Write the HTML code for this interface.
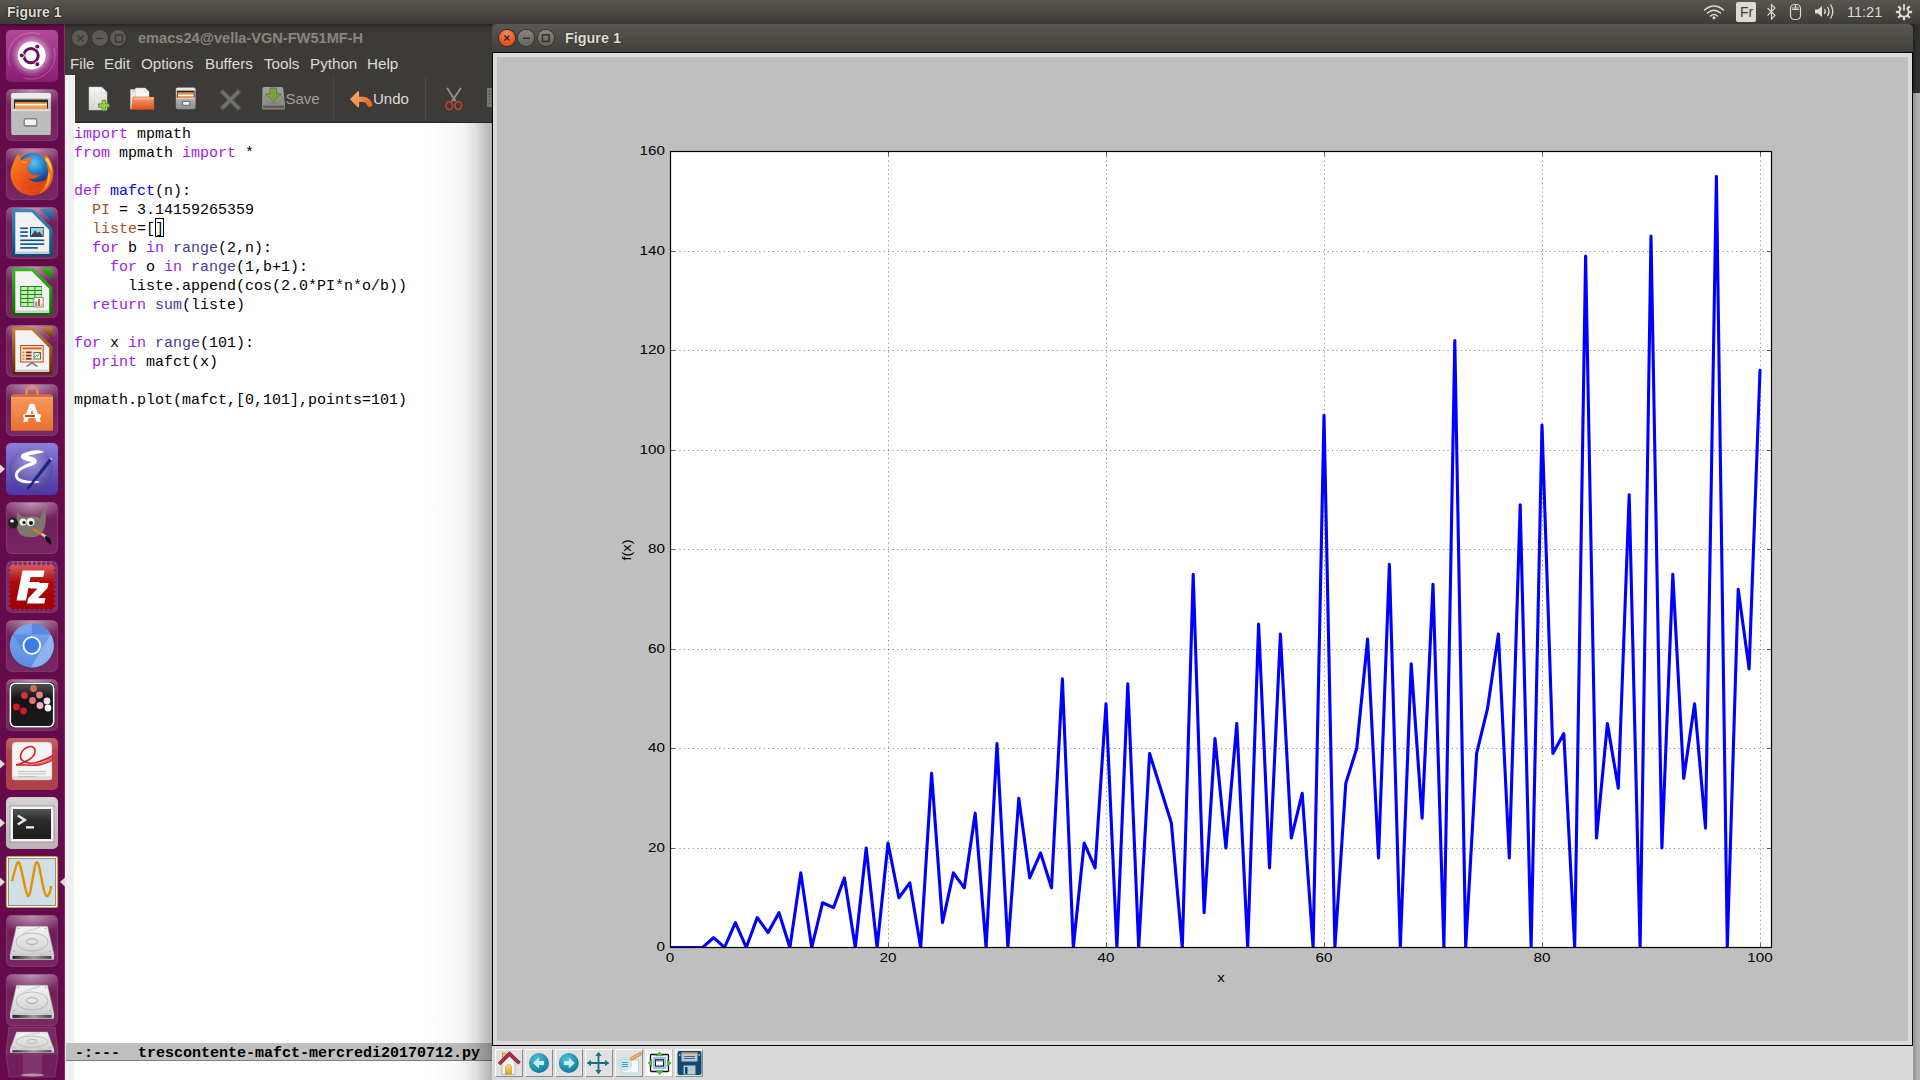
<!DOCTYPE html>
<html><head><meta charset="utf-8">
<style>
*{margin:0;padding:0;box-sizing:border-box}
html,body{width:1920px;height:1080px;overflow:hidden;background:#3c3b37;font-family:"Liberation Sans",sans-serif}
.a{position:absolute}
#panel{position:absolute;left:0;top:0;width:1920px;height:24px;background:linear-gradient(#57554e,#3d3c38)}
#panel .title{position:absolute;left:7px;top:4px;font-weight:bold;font-size:14px;color:#dfdbd2;text-shadow:0 0 1.5px #000,0 0 1px #000}
#launcher{position:absolute;left:0;top:24px;width:65px;height:1056px;background:#650b4c}
#emacs{position:absolute;left:65px;top:24px;width:427px;height:1056px;overflow:hidden}
#ebody{position:absolute;left:0;top:28px;width:427px;height:1028px;background:#fff}
#etitle{position:absolute;left:0;top:0;width:427px;height:28px;background:linear-gradient(#262522,#383733 4px,#3c3b37 8px);border-radius:5px 0 0 0}
.etxt{position:absolute;left:73px;top:5.5px;font-weight:bold;font-size:14.6px;color:#8a867e;white-space:nowrap}
#emenu{position:absolute;left:0;top:28px;width:427px;height:23px;background:#3c3b37;color:#dfdbd2;font-size:15.2px}
#emenu span{position:absolute;top:3px}
#etool{position:absolute;left:10px;top:51px;width:417px;height:48px;background:#3c3b37;border-bottom:1px solid #262622}
#efringe{position:absolute;left:0;top:51px;width:8.6px;height:1005px;background:#f0f0f0}
#eshade{position:absolute;left:360px;top:99px;width:67px;height:1000px;background:linear-gradient(90deg,rgba(0,0,0,0),rgba(0,0,0,0.04) 56%,rgba(0,0,0,0.12) 75%,rgba(0,0,0,0.25) 93%,rgba(0,0,0,0.31))}
#code{position:absolute;left:9px;top:101px;font-family:"Liberation Mono",monospace;font-size:15px;line-height:19px;color:#000;white-space:pre}
#modeline{position:absolute;left:1px;top:1019px;width:426px;height:18px;background:#bfbfbf;border-bottom:1px solid #7f7f7f;font-family:"Liberation Mono",monospace;font-weight:bold;font-size:15px;line-height:21px;white-space:pre;color:#000}
#fig{position:absolute;left:492px;top:24px;width:1421px;height:1056px}
#fbar{position:absolute;left:0;top:1022px;width:1421px;height:34px;background:#d9d9d9}
#ftitle{position:absolute;left:0;top:0;width:1421px;height:28px;background:linear-gradient(#5b5950,#3f3e3a);border-radius:5px 5px 0 0}
.ftxt{position:absolute;left:73px;top:6px;font-weight:bold;font-size:14.4px;color:#dfdbd2;white-space:nowrap;text-shadow:0 0 1.5px #1a1a18}
#canvasframe{position:absolute;left:0;top:28px;width:1421px;height:994px;border:1px solid #000;background:#dadada}
#canvas{position:absolute;left:5px;top:33px;width:1411px;height:984px;background:#bfbfbf}
#rstrip{position:absolute;left:1913px;top:93px;width:7px;height:987px;background:linear-gradient(90deg,#979797,#9a9a9a 28%,#a5a5a3 45%,#afafad 60%,#b0b0ae)}
#rstrip2{position:absolute;left:1913px;top:24px;width:7px;height:69px;background:linear-gradient(90deg,#222220,#2e2d2a 40%,#34332f)}
.tl{position:absolute;font-size:13.6px;color:#000;line-height:16px}
.cur{outline:1px solid #000;outline-offset:-1px}
.kw{color:#a020f0}.fn{color:#0000ff}.bi{color:#483d8b}.vn{color:#a0522d}
.wb{position:absolute;width:16px;height:16px;border-radius:50%}
.tb{position:absolute;top:1049px;width:28px;height:28px;background:#e1e1e1;border:1px solid;border-color:#fcfcfc #8c8c8c #8c8c8c #fcfcfc}
</style></head><body>
<div id="panel"><div class="title">Figure 1</div>
<svg class="a" style="left:1690px;top:0" width="230" height="24" viewBox="1690 0 230 24">
<g fill="none" stroke="#dfdbd2" stroke-linecap="round">
<path d="M1704.5,10 Q1714,2 1723.5,10" stroke-width="1.5"/>
<path d="M1707.5,13 Q1714,7.5 1720.5,13" stroke-width="1.5"/>
<path d="M1710.5,16 Q1714,13 1717.5,16" stroke-width="1.5"/>
</g>
<path d="M1712,18 L1714,16 L1716,18 L1714,19.5 Z" fill="#dfdbd2"/>
<rect x="1736" y="2" width="20" height="20" rx="2" fill="#dfdbd2"/>
<path d="M1767.5,8 L1775,15.5 L1771.5,19 V4.5 L1775,8 L1767.5,15.5" fill="none" stroke="#dfdbd2" stroke-width="1.1"/>
<rect x="1790.5" y="4.5" width="10" height="15" rx="4" fill="none" stroke="#dfdbd2" stroke-width="1.2"/>
<path d="M1795.5,4.5 V9.5 M1792.5,9.5 h6" stroke="#dfdbd2" stroke-width="1"/>
<path d="M1792,7 q3.5,-1 7,0 v3 h-7 Z" fill="#dfdbd2" opacity="0.5"/>
<path d="M1815,9.5 H1818 L1822,6 V17 L1818,13.5 H1815 Z" fill="#dfdbd2"/>
<g fill="none" stroke="#dfdbd2" stroke-width="1.3"><path d="M1824.5,9 Q1826,11.5 1824.5,14"/><path d="M1827.5,7 Q1830.5,11.5 1827.5,16"/><path d="M1830.5,4.5 Q1835,11.5 1830.5,18.5"/></g>
<g transform="translate(1904,12)" fill="#dfdbd2"><rect x="-1.15" y="-8.1" width="2.3" height="3.2" transform="rotate(45)"/><rect x="-1.15" y="-8.1" width="2.3" height="3.2" transform="rotate(90)"/><rect x="-1.15" y="-8.1" width="2.3" height="3.2" transform="rotate(135)"/><rect x="-1.15" y="-8.1" width="2.3" height="3.2" transform="rotate(180)"/><rect x="-1.15" y="-8.1" width="2.3" height="3.2" transform="rotate(225)"/><rect x="-1.15" y="-8.1" width="2.3" height="3.2" transform="rotate(270)"/><rect x="-1.15" y="-8.1" width="2.3" height="3.2" transform="rotate(315)"/><path d="M-2.67,-3.81 A4.65,4.65 0 1 0 2.67,-3.81" fill="none" stroke="#dfdbd2" stroke-width="1.7"/><rect x="-0.9" y="-8" width="1.8" height="6.6"/></g>
</svg>
<div class="a" style="left:1737px;top:4px;width:19px;text-align:center;font-size:14px;color:#3c3b37">Fr</div>
<div class="a" style="left:1847px;top:4px;font-size:14.5px;color:#dfdbd2">11:21</div>

</div>
<div id="launcher"></div>
<svg width="65" height="1056" viewBox="0 24 65 1056" style="position:absolute;left:0;top:24px">
<defs>
<linearGradient id="tg" x1="0" y1="0" x2="0" y2="1"><stop offset="0" stop-color="#fff" stop-opacity="0.22"/><stop offset="0.35" stop-color="#fff" stop-opacity="0.08"/><stop offset="1" stop-color="#fff" stop-opacity="0.12"/></linearGradient>
<radialGradient id="glow" cx="0.5" cy="0" r="0.6"><stop offset="0" stop-color="#fff" stop-opacity="0.45"/><stop offset="1" stop-color="#fff" stop-opacity="0"/></radialGradient>
<linearGradient id="ubg" x1="0" y1="0" x2="0" y2="1"><stop offset="0" stop-color="#b04a98"/><stop offset="1" stop-color="#8a1d74"/></linearGradient>
<linearGradient id="cab" x1="0" y1="0" x2="0" y2="1"><stop offset="0" stop-color="#d6d6d6"/><stop offset="1" stop-color="#9a9a9a"/></linearGradient>
<radialGradient id="ffg" cx="0.55" cy="0.3" r="0.6"><stop offset="0" stop-color="#5ac8f0"/><stop offset="0.6" stop-color="#1f6fc0"/><stop offset="1" stop-color="#123a80"/></radialGradient>
<linearGradient id="ffo" x1="0" y1="0" x2="1" y2="1"><stop offset="0" stop-color="#ff8a1a"/><stop offset="0.6" stop-color="#e8501c"/><stop offset="1" stop-color="#d23a10"/></linearGradient>
<linearGradient id="bag" x1="0" y1="0" x2="0" y2="1"><stop offset="0" stop-color="#f29a5a"/><stop offset="1" stop-color="#ec7030"/></linearGradient>
<linearGradient id="emt" x1="0" y1="0" x2="0" y2="1"><stop offset="0" stop-color="#8a7fd8"/><stop offset="1" stop-color="#4a35a8"/></linearGradient>
<radialGradient id="emc" cx="0.5" cy="0.3" r="0.7"><stop offset="0" stop-color="#a098e0"/><stop offset="1" stop-color="#4a3a9a"/></radialGradient>
<linearGradient id="fz" x1="0" y1="0" x2="0" y2="1"><stop offset="0" stop-color="#e06060"/><stop offset="0.4" stop-color="#b00808"/><stop offset="1" stop-color="#a00000"/></linearGradient>
<linearGradient id="chr" x1="0" y1="0" x2="0" y2="1"><stop offset="0" stop-color="#7aa6ee"/><stop offset="1" stop-color="#5a8ee6"/></linearGradient>
<linearGradient id="scp" x1="0" y1="0" x2="0" y2="1"><stop offset="0" stop-color="#505050"/><stop offset="0.35" stop-color="#141414"/><stop offset="1" stop-color="#1a1a1a"/></linearGradient>
<linearGradient id="term" x1="0" y1="0" x2="0" y2="1"><stop offset="0" stop-color="#555"/><stop offset="0.4" stop-color="#2a2a2a"/><stop offset="1" stop-color="#1e1e1e"/></linearGradient>
<linearGradient id="disk" x1="0" y1="0" x2="0" y2="1"><stop offset="0" stop-color="#f4f4f4"/><stop offset="1" stop-color="#cfcfcf"/></linearGradient>
<linearGradient id="dfront" x1="0" y1="0" x2="1" y2="0"><stop offset="0" stop-color="#222"/><stop offset="0.55" stop-color="#9a9a9a"/><stop offset="0.8" stop-color="#666"/><stop offset="1" stop-color="#444"/></linearGradient>
<linearGradient id="evt" x1="0" y1="0" x2="0" y2="1"><stop offset="0" stop-color="#c86068"/><stop offset="0.3" stop-color="#b3404a"/><stop offset="1" stop-color="#b0424c"/></linearGradient>
<linearGradient id="termt" x1="0" y1="0" x2="0" y2="1"><stop offset="0" stop-color="#d8d0d6"/><stop offset="1" stop-color="#bdb2bb"/></linearGradient>
<linearGradient id="topsh" x1="0" y1="0" x2="0" y2="1"><stop offset="0" stop-color="#000" stop-opacity="0.35"/><stop offset="1" stop-color="#000" stop-opacity="0"/></linearGradient>
</defs>
<rect x="6" y="30" width="52" height="52" rx="5" fill="url(#ubg)"/>
<clipPath id="uclip"><rect x="0" y="0" width="52" height="52" rx="5"/></clipPath><g transform="translate(6,30)"><g clip-path="url(#uclip)"><circle cx="26" cy="26" r="20" fill="#fff" fill-opacity="0.10"/><path d="M4,36 A24,24 0 0 1 34,4" stroke="#fff" stroke-opacity="0.16" stroke-width="1.5" fill="none"/><path d="M48,18 A24,24 0 0 1 18,48" stroke="#fff" stroke-opacity="0.16" stroke-width="1.5" fill="none"/><circle cx="25.8" cy="25.6" r="18" fill="#fff" fill-opacity="0.14"/><circle cx="25.8" cy="25.6" r="16" fill="#fff" fill-opacity="0.14"/></g><circle cx="25.7" cy="25.5" r="14" fill="#fff"/><circle cx="25" cy="25.6" r="7.2" fill="none" stroke="#6a1259" stroke-width="3"/><circle cx="31.3" cy="16.6" r="2.5" fill="#6a1259" stroke="#fff" stroke-width="1"/><circle cx="15.8" cy="25.4" r="2.5" fill="#6a1259" stroke="#fff" stroke-width="1"/><circle cx="31.3" cy="34.2" r="2.5" fill="#6a1259" stroke="#fff" stroke-width="1"/></g>
<rect x="6.5" y="89.5" width="51" height="51" rx="5" fill="url(#tg)" stroke="#fff" stroke-opacity="0.13"/><rect x="6.5" y="89.5" width="51" height="30" rx="5" fill="url(#glow)"/>
<g transform="translate(6,89)"><rect x="5" y="4" width="40" height="42" rx="2.5" fill="url(#cab)"/><rect x="5" y="4" width="40" height="5" rx="2.5" fill="#ececec"/><rect x="8" y="10.5" width="34" height="9" fill="#2a2a2a"/><path d="M9,13 H41 V20 H9 Z" fill="#f0a050"/><rect x="9.5" y="15" width="31" height="1.4" fill="#fff"/><rect x="9" y="13" width="32" height="1" fill="#d87a30"/><path d="M6,20.5 H44 V45 Q44,46 43,46 H7 Q6,46 6,45 Z" fill="#bcbcbc"/><rect x="6" y="20.5" width="38" height="1.6" fill="#e2e2e2"/><rect x="17.5" y="29" width="14" height="9" rx="1.8" fill="#8a8a8a"/><rect x="19" y="30.5" width="11" height="5.5" rx="1" fill="#f2f2f2"/></g>
<rect x="6.5" y="148.5" width="51" height="51" rx="5" fill="url(#tg)" stroke="#fff" stroke-opacity="0.13"/><rect x="6.5" y="148.5" width="51" height="30" rx="5" fill="url(#glow)"/>
<g transform="translate(6,148)"><circle cx="26" cy="26" r="21.5" fill="url(#ffo)"/><circle cx="26.5" cy="21.5" r="16.5" fill="url(#ffg)"/><path d="M40,7 C46,12 48,20 47,27 C46,36 40,43 33,46 C38,40 42,33 42,26 C42,18 40,12 37,9 Z" fill="#f06a1a"/><path d="M41,9 C45,14 46,20 45.5,25 C44,20 42,15 39,12 Z" fill="#ffd23a"/><path d="M44,24 C45,30 43,36 39,40 C41,35 42,30 42,26 Z" fill="#ffb02a"/><path d="M6,24 C6,15 10,9 12.5,5.5 C13,9 14,11.5 16,12.5 C19,10 23,9 26,10 C24,11.5 23.5,13.5 25,15.5 C21.5,16.5 20,20 22.5,23.5 C25,27 30,27.5 34.5,26.5 C31.5,30.5 26,32 22,30 C26,34.5 33,35 38.5,32 C35,39 28,43 21,42 C12,41 6,33 6,24 Z" fill="url(#ffo)"/><path d="M15.5,13 C17,15 19,15 21,14" stroke="#ffb060" stroke-width="1" fill="none"/></g>
<rect x="6.5" y="207.5" width="51" height="51" rx="5" fill="url(#tg)" stroke="#fff" stroke-opacity="0.13"/><rect x="6.5" y="207.5" width="51" height="30" rx="5" fill="url(#glow)"/><defs><linearGradient id="lw" x1="0" y1="0" x2="0" y2="1"><stop offset="0" stop-color="#3a8ac0"/><stop offset="1" stop-color="#0b4a7e"/></linearGradient></defs><g transform="translate(6,207)"><path d="M8,2 H27 L46.5,21.5 V47.5 Q46.5,49.5 44.5,49.5 H8 Q6,49.5 6,47.5 V4 Q6,2 8,2 Z" fill="url(#lw)"/><path d="M9.3,5.3 H25.8 L43.2,22.7 V46.8 H9.3 Z" fill="#f2f2f2"/><path d="M9.3,44.5 H43.2 V46.8 H9.3 Z" fill="#c8cccc"/><path d="M34,2 H44.5 Q46.5,2 46.5,4 V14.5 Z" fill="url(#lw)"/><g fill="#0f4f86"><rect x="14.2" y="20.5" width="7.7" height="1.6"/><rect x="14.2" y="24.3" width="7.7" height="1.6"/><rect x="14.2" y="28.1" width="7.7" height="1.6"/><rect x="24" y="20" width="13.7" height="10"/><rect x="14.2" y="32.5" width="24" height="1.6"/><rect x="14.2" y="36.3" width="24" height="1.6"/><rect x="14.2" y="40.1" width="17.5" height="1.6"/></g><rect x="25" y="21" width="11.7" height="8" fill="#9ad0f2"/><path d="M25,29 L29,23.5 L31.5,26 L33.5,24.5 L36.7,29 Z" fill="#444"/><circle cx="35.5" cy="22.2" r="1.3" fill="#f8d040"/></g>
<rect x="6.5" y="266.5" width="51" height="51" rx="5" fill="url(#tg)" stroke="#fff" stroke-opacity="0.13"/><rect x="6.5" y="266.5" width="51" height="30" rx="5" fill="url(#glow)"/><defs><linearGradient id="lc" x1="0" y1="0" x2="0" y2="1"><stop offset="0" stop-color="#3cb82a"/><stop offset="1" stop-color="#0a6800"/></linearGradient></defs><g transform="translate(6,266)"><path d="M8,2 H27 L46.5,21.5 V47.5 Q46.5,49.5 44.5,49.5 H8 Q6,49.5 6,47.5 V4 Q6,2 8,2 Z" fill="url(#lc)"/><path d="M9.3,5.3 H25.8 L43.2,22.7 V46.8 H9.3 Z" fill="#f2f2f2"/><path d="M9.3,44.5 H43.2 V46.8 H9.3 Z" fill="#c8cccc"/><path d="M34,2 H44.5 Q46.5,2 46.5,4 V14.5 Z" fill="url(#lc)"/><rect x="14.2" y="20" width="21.8" height="20.8" fill="#1a8a10"/><rect x="15.2" y="21.0" width="6.1" height="3" fill="#c0f0b0"/><rect x="22.3" y="21.0" width="6.1" height="3" fill="#c0f0b0"/><rect x="29.4" y="21.0" width="6.1" height="3" fill="#c0f0b0"/><rect x="15.2" y="25.0" width="6.1" height="3" fill="#c0f0b0"/><rect x="22.3" y="25.0" width="6.1" height="3" fill="#c0f0b0"/><rect x="29.4" y="25.0" width="6.1" height="3" fill="#c0f0b0"/><rect x="15.2" y="29.0" width="6.1" height="3" fill="#c0f0b0"/><rect x="22.3" y="29.0" width="6.1" height="3" fill="#c0f0b0"/><rect x="29.4" y="29.0" width="6.1" height="3" fill="#c0f0b0"/><rect x="15.2" y="33.0" width="6.1" height="3" fill="#c0f0b0"/><rect x="22.3" y="33.0" width="6.1" height="3" fill="#c0f0b0"/><rect x="29.4" y="33.0" width="6.1" height="3" fill="#c0f0b0"/><rect x="15.2" y="37.0" width="6.1" height="3" fill="#c0f0b0"/><rect x="22.3" y="37.0" width="6.1" height="3" fill="#c0f0b0"/><rect x="29.4" y="37.0" width="6.1" height="3" fill="#c0f0b0"/><rect x="27.3" y="31" width="10.4" height="10.4" fill="#8a8a8a"/><rect x="28.3" y="32" width="8.4" height="8.4" fill="#fff"/><rect x="29.3" y="35.5" width="2" height="4.5" fill="#3aa0f0"/><rect x="32" y="33" width="2" height="7" fill="#e86020"/><rect x="34.7" y="37.5" width="2" height="2.5" fill="#f0c020"/></g>
<rect x="6.5" y="325.5" width="51" height="51" rx="5" fill="url(#tg)" stroke="#fff" stroke-opacity="0.13"/><rect x="6.5" y="325.5" width="51" height="30" rx="5" fill="url(#glow)"/><defs><linearGradient id="li" x1="0" y1="0" x2="0" y2="1"><stop offset="0" stop-color="#c8803a"/><stop offset="1" stop-color="#5e2400"/></linearGradient></defs><g transform="translate(6,325)"><path d="M8,2 H27 L46.5,21.5 V47.5 Q46.5,49.5 44.5,49.5 H8 Q6,49.5 6,47.5 V4 Q6,2 8,2 Z" fill="url(#li)"/><path d="M9.3,5.3 H25.8 L43.2,22.7 V46.8 H9.3 Z" fill="#f2f2f2"/><path d="M9.3,44.5 H43.2 V46.8 H9.3 Z" fill="#c8cccc"/><path d="M34,2 H44.5 Q46.5,2 46.5,4 V14.5 Z" fill="url(#li)"/><rect x="14.2" y="20" width="23.5" height="17.5" fill="#c04a10"/><rect x="15.2" y="21" width="21.5" height="15.5" fill="#fbe4d4"/><rect x="16.5" y="22.5" width="19" height="1.8" fill="#d05a20"/><rect x="16.5" y="26.5" width="2" height="1.8" fill="#e08050"/><rect x="20" y="26.5" width="5.5" height="1.8" fill="#8a3010"/><rect x="16.5" y="29.7" width="2" height="1.8" fill="#e08050"/><rect x="20" y="29.7" width="5.5" height="1.8" fill="#8a3010"/><rect x="16.5" y="32.9" width="2" height="1.8" fill="#e08050"/><rect x="20" y="32.9" width="5.5" height="1.8" fill="#8a3010"/><rect x="27.5" y="27" width="7.5" height="7.5" fill="#666"/><rect x="28.5" y="28" width="5.5" height="5.5" fill="#fff"/><path d="M29,32.5 L30.5,30 L31.5,31.5 L33.5,28.5" stroke="#2a9a2a" stroke-width="1" fill="none"/><path d="M20.5,41.5 L26,37.8 L31.5,41.5" stroke="#6a6a6a" stroke-width="1.4" fill="none"/></g>
<rect x="6.5" y="384.5" width="51" height="51" rx="5" fill="url(#tg)" stroke="#fff" stroke-opacity="0.13"/><rect x="6.5" y="384.5" width="51" height="30" rx="5" fill="url(#glow)"/>
<g transform="translate(6,384)"><path d="M20.5,16 V7 Q20.5,4 23.5,4 H28.5 Q31.5,4 31.5,7 V16" stroke="#ee8a58" stroke-width="2.6" fill="none"/><path d="M5,12 H47 V46.8 H5 Z" fill="url(#bag)"/><path d="M7,10.2 H45 L47,13 H5 Z" fill="#e0683a"/><rect x="5" y="13" width="42" height="2" fill="#f7a070" opacity="0.6"/><path d="M17,37.7 L24,19.7 H28 L35,37.7 H30.5 L26,25.5 L21.5,37.7 Z" fill="#fff"/><rect x="17" y="30" width="18" height="4" rx="2" fill="#fff"/><rect x="19" y="31" width="10" height="2" fill="#e04010"/></g>
<rect x="6" y="443" width="52" height="52" rx="5" fill="url(#emt)"/>
<g transform="translate(6,443)"><circle cx="25" cy="27" r="22" fill="url(#emc)"/><path d="M16,11 C24,7 34,6 38,9 C34,11 26,11 22,13 C30,14 34,18 28,22 C22,24 14,26 12,31 C10,36 20,38 28,38 C34,38 36,39 30,40 C20,41 10,40 9,33 C8,26 18,22 26,19 C20,18 12,16 16,11 Z" fill="#fff"/><path d="M44,15 L22,44 L21,46 L24,44.5 L46,17 Z" fill="#1a2a90" stroke="#0a1050" stroke-width="0.6"/><path d="M44,15 L46,17" stroke="#ccc" stroke-width="1.5"/></g>
<rect x="6.5" y="502.5" width="51" height="51" rx="5" fill="url(#tg)" stroke="#fff" stroke-opacity="0.13"/><rect x="6.5" y="502.5" width="51" height="30" rx="5" fill="url(#glow)"/>
<g transform="translate(6,502)"><path d="M11,9 C14,14 16,15 20,15 C25,14 31,14 34,16 C36,11 38,8 39,6 C41,16 40,28 34,33 C29,36 20,36 15,33 C10,29 10,20 11,9 Z" fill="#7d786c"/><ellipse cx="7" cy="21" rx="5" ry="5.5" fill="#222" transform="rotate(-20 7 21)"/><ellipse cx="6" cy="19" rx="1.8" ry="1.5" fill="#fff"/><circle cx="17" cy="20" r="3.5" fill="#f0f0f0"/><circle cx="18" cy="20.5" r="1.6" fill="#111"/><circle cx="24.5" cy="20" r="4" fill="#f0f0f0"/><circle cx="25" cy="21" r="2" fill="#111"/><path d="M27,27 L37,33" stroke="#e07a10" stroke-width="2.2"/><path d="M36,32 L40,35" stroke="#ccc" stroke-width="2.4"/><path d="M39,34 C44,35 46,38 45,43 C42,41 39,38 39,34 Z" fill="#111"/></g>
<rect x="6.5" y="561.5" width="51" height="51" rx="5" fill="url(#tg)" stroke="#fff" stroke-opacity="0.13"/><rect x="6.5" y="561.5" width="51" height="30" rx="5" fill="url(#glow)"/>
<g transform="translate(6,561)"><rect x="2.5" y="2.5" width="47" height="47" fill="url(#fz)"/><g fill="#7a2e6c"><circle cx="4.80" cy="2.5" r="1.9"/><circle cx="4.80" cy="49.5" r="1.9"/><circle cx="2.5" cy="4.80" r="1.9"/><circle cx="49.5" cy="4.80" r="1.9"/><circle cx="9.51" cy="2.5" r="1.9"/><circle cx="9.51" cy="49.5" r="1.9"/><circle cx="2.5" cy="9.51" r="1.9"/><circle cx="49.5" cy="9.51" r="1.9"/><circle cx="14.22" cy="2.5" r="1.9"/><circle cx="14.22" cy="49.5" r="1.9"/><circle cx="2.5" cy="14.22" r="1.9"/><circle cx="49.5" cy="14.22" r="1.9"/><circle cx="18.93" cy="2.5" r="1.9"/><circle cx="18.93" cy="49.5" r="1.9"/><circle cx="2.5" cy="18.93" r="1.9"/><circle cx="49.5" cy="18.93" r="1.9"/><circle cx="23.64" cy="2.5" r="1.9"/><circle cx="23.64" cy="49.5" r="1.9"/><circle cx="2.5" cy="23.64" r="1.9"/><circle cx="49.5" cy="23.64" r="1.9"/><circle cx="28.35" cy="2.5" r="1.9"/><circle cx="28.35" cy="49.5" r="1.9"/><circle cx="2.5" cy="28.35" r="1.9"/><circle cx="49.5" cy="28.35" r="1.9"/><circle cx="33.06" cy="2.5" r="1.9"/><circle cx="33.06" cy="49.5" r="1.9"/><circle cx="2.5" cy="33.06" r="1.9"/><circle cx="49.5" cy="33.06" r="1.9"/><circle cx="37.77" cy="2.5" r="1.9"/><circle cx="37.77" cy="49.5" r="1.9"/><circle cx="2.5" cy="37.77" r="1.9"/><circle cx="49.5" cy="37.77" r="1.9"/><circle cx="42.48" cy="2.5" r="1.9"/><circle cx="42.48" cy="49.5" r="1.9"/><circle cx="2.5" cy="42.48" r="1.9"/><circle cx="49.5" cy="42.48" r="1.9"/><circle cx="47.19" cy="2.5" r="1.9"/><circle cx="47.19" cy="49.5" r="1.9"/><circle cx="2.5" cy="47.19" r="1.9"/><circle cx="49.5" cy="47.19" r="1.9"/></g><path d="M16.5,9.5 H38.5 L37.3,16 H24.5 L23.5,21 H33.5 L32.4,27 H22.4 L20,39.5 H10.5 Z" fill="#fff"/><path d="M25,22 H42.5 L41.5,27 L32,37 H39.5 L38.3,42.5 H21 L22,37.5 L31.5,27.5 H24 Z" fill="#fff"/></g>
<rect x="6.5" y="620.5" width="51" height="51" rx="5" fill="url(#tg)" stroke="#fff" stroke-opacity="0.13"/><rect x="6.5" y="620.5" width="51" height="30" rx="5" fill="url(#glow)"/>
<g transform="translate(6,620)"><circle cx="25.8" cy="25.5" r="22" fill="url(#chr)"/><path d="M25.8,3.5 A22,22 0 0 1 44.8,14.5 H25.8 Z" fill="#5a8ae0"/><path d="M6.8,14.5 L16,30 L25.8,14.5" fill="#4a7ad8" opacity="0.5"/><path d="M44.8,14.5 A22,22 0 0 1 25,47.5 L35,30 Z" fill="#9cc0f8" opacity="0.7"/><circle cx="25.8" cy="25.5" r="9.3" fill="#fff"/><circle cx="25.8" cy="25.5" r="7.4" fill="#3d7ce6"/></g>
<rect x="6.5" y="679.5" width="51" height="51" rx="5" fill="url(#tg)" stroke="#fff" stroke-opacity="0.13"/><rect x="6.5" y="679.5" width="51" height="30" rx="5" fill="url(#glow)"/>
<g transform="translate(6,679)"><rect x="3" y="3" width="46" height="46" rx="6" fill="#111"/><rect x="4.3" y="4.3" width="43.4" height="43.4" rx="5" fill="url(#scp)" stroke="#fff" stroke-width="1.6"/><circle cx="27.5" cy="9.5" r="3.4" fill="#d0705a"/><circle cx="18.5" cy="16.5" r="3.4" fill="#d8303a"/><circle cx="33.5" cy="16" r="3.4" fill="#e88090"/><circle cx="26.5" cy="21.5" r="3.4" fill="#e0707e"/><circle cx="41" cy="22" r="3.4" fill="#f8e0ea"/><circle cx="10.5" cy="28" r="3.4" fill="#d81824"/><circle cx="34" cy="26.5" r="3.4" fill="#f0b0c8"/><circle cx="17.5" cy="32" r="3.4" fill="#d81824"/><circle cx="42" cy="29" r="3.4" fill="#fff"/></g>
<rect x="6" y="738" width="52" height="52" rx="5" fill="url(#evt)"/>
<g transform="translate(6,738)"><rect x="6" y="4" width="40" height="38" rx="4" fill="#f4f4f4" stroke="#999" stroke-width="0.5"/><rect x="6" y="38" width="40" height="4" rx="2" fill="#ddd"/><path d="M10,27 C18,25 30,20 29,12 C28,6 18,8 15,16 C12,24 24,27 32,24 C38,22 43,20 46,18 V22 C40,26 30,28 22,27 C16,27 12,27 10,27 Z" fill="none" stroke="#d02020" stroke-width="1.6"/><path d="M28,26 C36,25 42,22 46,18 V22 C40,26 32,27 28,26 Z" fill="#e06070"/><rect x="12" y="33" width="28" height="0.8" fill="#bbb"/><rect x="12" y="35.5" width="28" height="0.8" fill="#bbb"/><rect x="12" y="38" width="18" height="0.8" fill="#bbb"/></g>
<rect x="6" y="797" width="52" height="52" rx="5" fill="url(#termt)"/>
<g transform="translate(6,797)"><rect x="4" y="9" width="44" height="36" fill="#f4f4f4" stroke="#888" stroke-width="0.8"/><rect x="7" y="12" width="38" height="30" fill="url(#term)"/><path d="M11.8,18.5 L18.8,23 L11.8,27.5" stroke="#e0e0e0" stroke-width="2.6" fill="none"/><rect x="20" y="29.2" width="8" height="2.3" fill="#eee"/></g>
<g transform="translate(6,856)"><rect x="0.5" y="0.5" width="51" height="51" rx="2" fill="#fff" stroke="#d89a48" stroke-width="1.2"/><rect x="2.5" y="2.5" width="47" height="47" fill="#cfdfe3" stroke="#777" stroke-width="0.8"/><path d="M6,25 C8,18 10,8 12,6 C15,4 19,38 22,40 C25,42 28,6 31,6 C34,6 37,40 41,40 C43,40 45,34 45,30" stroke="#e0900c" stroke-width="2.4" fill="none"/></g>
<rect x="6.5" y="915.5" width="51" height="51" rx="5" fill="url(#tg)" stroke="#fff" stroke-opacity="0.13"/><rect x="6.5" y="915.5" width="51" height="30" rx="5" fill="url(#glow)"/>
<g transform="translate(6,915)"><path d="M10.5,11.3 H41.5 L48,39.7 H4 Z" fill="url(#disk)" stroke="#aaa" stroke-width="0.6"/><ellipse cx="26" cy="27" rx="16" ry="9" fill="none" stroke="#b0b0b0" stroke-width="0.8"/><ellipse cx="26" cy="26.5" rx="5.5" ry="2.9" fill="#e4e4e4" stroke="#999" stroke-width="0.8"/><path d="M16,20 C22,15 30,13.5 34,12.5" stroke="#c8c8c8" stroke-width="1" fill="none"/><circle cx="12.5" cy="13.5" r="0.7" fill="#999"/><circle cx="39.5" cy="13.5" r="0.7" fill="#999"/><circle cx="8" cy="36.5" r="0.7" fill="#999"/><circle cx="44" cy="36.5" r="0.7" fill="#999"/><path d="M4,39.7 H48 V44 Q48,44.8 47,44.8 H5 Q4,44.8 4,44 Z" fill="#cfcfcf"/><rect x="6.5" y="40.6" width="39" height="3.3" fill="url(#dfront)"/><rect x="4" y="39.7" width="44" height="0.8" fill="#f4f4f4"/></g>
<rect x="6.5" y="974.5" width="51" height="51" rx="5" fill="url(#tg)" stroke="#fff" stroke-opacity="0.13"/><rect x="6.5" y="974.5" width="51" height="30" rx="5" fill="url(#glow)"/>
<g transform="translate(6,974)"><path d="M10.5,11.3 H41.5 L48,39.7 H4 Z" fill="url(#disk)" stroke="#aaa" stroke-width="0.6"/><ellipse cx="26" cy="27" rx="16" ry="9" fill="none" stroke="#b0b0b0" stroke-width="0.8"/><ellipse cx="26" cy="26.5" rx="5.5" ry="2.9" fill="#e4e4e4" stroke="#999" stroke-width="0.8"/><path d="M16,20 C22,15 30,13.5 34,12.5" stroke="#c8c8c8" stroke-width="1" fill="none"/><circle cx="12.5" cy="13.5" r="0.7" fill="#999"/><circle cx="39.5" cy="13.5" r="0.7" fill="#999"/><circle cx="8" cy="36.5" r="0.7" fill="#999"/><circle cx="44" cy="36.5" r="0.7" fill="#999"/><path d="M4,39.7 H48 V44 Q48,44.8 47,44.8 H5 Q4,44.8 4,44 Z" fill="#cfcfcf"/><rect x="6.5" y="40.6" width="39" height="3.3" fill="url(#dfront)"/><rect x="4" y="39.7" width="44" height="0.8" fill="#f4f4f4"/></g>
<path d="M9,1027 H55 L58,1053 H6 Z" fill="#fff" fill-opacity="0.12" stroke="#fff" stroke-opacity="0.15"/><path d="M6,1054 H58 L55,1077 H9 Z" fill="#fff" fill-opacity="0.08" stroke="#fff" stroke-opacity="0.12"/>
<g transform="translate(6,1025) scale(1,0.62) translate(0,0)"><path d="M10.5,11.3 H41.5 L48,39.7 H4 Z" fill="url(#disk)" stroke="#aaa" stroke-width="0.6"/><ellipse cx="26" cy="27" rx="16" ry="9" fill="none" stroke="#b0b0b0" stroke-width="0.8"/><ellipse cx="26" cy="26.5" rx="5.5" ry="2.9" fill="#e4e4e4" stroke="#999" stroke-width="0.8"/><path d="M16,20 C22,15 30,13.5 34,12.5" stroke="#c8c8c8" stroke-width="1" fill="none"/><circle cx="12.5" cy="13.5" r="0.7" fill="#999"/><circle cx="39.5" cy="13.5" r="0.7" fill="#999"/><circle cx="8" cy="36.5" r="0.7" fill="#999"/><circle cx="44" cy="36.5" r="0.7" fill="#999"/><path d="M4,39.7 H48 V44 Q48,44.8 47,44.8 H5 Q4,44.8 4,44 Z" fill="#cfcfcf"/><rect x="6.5" y="40.6" width="39" height="3.3" fill="url(#dfront)"/><rect x="4" y="39.7" width="44" height="0.8" fill="#f4f4f4"/></g>
<rect x="23" y="1054" width="19" height="20" fill="#fff" fill-opacity="0.1"/><ellipse cx="32.5" cy="1075" rx="12" ry="1.5" fill="#ddd" fill-opacity="0.6"/>
<rect x="0" y="24" width="65" height="4" fill="url(#topsh)"/>
<rect x="64" y="24" width="1" height="1056" fill="#a04a80" opacity="0.55"/>
<path d="M0,464.5 L5,469 L0,473.5 Z" fill="#dcdcdc"/>
<path d="M0,759.5 L5,764 L0,768.5 Z" fill="#dcdcdc"/>
<path d="M0,818.5 L5,823 L0,827.5 Z" fill="#dcdcdc"/>
<path d="M0,877.5 L5,882 L0,886.5 Z" fill="#dcdcdc"/>
<path d="M65,877.5 L60,882 L65,886.5 Z" fill="#dcdcdc"/>
</svg>
<div class="a" style="left:65px;top:24px;width:6px;height:6px;background:#4e0c34"></div>
<div class="a" style="left:1906px;top:24px;width:7px;height:6px;background:#2a2927"></div>
<div id="emacs">
  <div id="ebody"></div>
  <div id="etitle">
    <div class="wb" style="left:7.4px;top:6.3px;background:#5d5b55;box-shadow:0 0 0 1px #34332f"></div>
    <div class="wb" style="left:26.5px;top:6.3px;background:#5d5b55;box-shadow:0 0 0 1px #34332f"></div>
    <div class="wb" style="left:45.4px;top:6.3px;background:#5d5b55;box-shadow:0 0 0 1px #34332f"></div>
    <svg class="a" style="left:0;top:0" width="70" height="28"><g stroke="#3a3935" stroke-width="1.3" fill="none"><path d="M12.6,11.5 l6,6 m0,-6 l-6,6"/><path d="M31,14.5 h7"/><rect x="50.5" y="11" width="7" height="7"/></g></svg>
    <div class="etxt">emacs24@vella-VGN-FW51MF-H</div>
  </div>
  <div id="emenu"><span style="left:5px">File</span><span style="left:39px">Edit</span><span style="left:76px">Options</span><span style="left:140px">Buffers</span><span style="left:199px">Tools</span><span style="left:245px">Python</span><span style="left:302px">Help</span></div>
  <div id="efringe"></div>
  <div id="etool"></div>
  <svg class="a" style="left:0;top:0" width="427" height="100" viewBox="65 24 427 100">
<defs>
<linearGradient id="pg" x1="0" y1="0" x2="0" y2="1"><stop offset="0" stop-color="#f6f6f6"/><stop offset="1" stop-color="#d4d4d4"/></linearGradient>
<linearGradient id="og" x1="0" y1="0" x2="0" y2="1"><stop offset="0" stop-color="#f7a070"/><stop offset="1" stop-color="#e0501a"/></linearGradient>
<linearGradient id="cg" x1="0" y1="0" x2="0" y2="1"><stop offset="0" stop-color="#cfcfcf"/><stop offset="1" stop-color="#8f8f8f"/></linearGradient>
<linearGradient id="ug" gradientUnits="userSpaceOnUse" x1="350" y1="91" x2="372" y2="108"><stop offset="0" stop-color="#fcb878"/><stop offset="1" stop-color="#e85a14"/></linearGradient>
<linearGradient id="sg" x1="0" y1="0" x2="0" y2="1"><stop offset="0" stop-color="#a2a19c"/><stop offset="1" stop-color="#85847f"/></linearGradient>
</defs>
<!-- new doc -->
<path d="M89,87 H101.5 L107,92.5 V110 H89 Z" fill="url(#pg)" stroke="#c4c4c4" stroke-width="0.5"/>
<path d="M101.5,87 V92.5 H107 Z" fill="#fff" stroke="#c8c8c8" stroke-width="0.5"/>
<path d="M102.2,100.2 h3.4 v3.6 h3.6 v3.4 h-3.6 v3.6 h-3.4 v-3.6 h-3.6 v-3.4 h3.6 Z" fill="#9ccc48" stroke="#4f8a1c" stroke-width="0.8"/>
<!-- open -->
<path d="M130.5,89.5 H139 L141,91.5 V109 H130.5 Z" fill="#ececec" stroke="#c8c8c8" stroke-width="0.5"/>
<rect x="132" y="91" width="2.5" height="0.8" fill="#f0a040"/>
<path d="M135.5,88 H145 L149,92 V106 H135.5 Z" fill="#f4f4f4" stroke="#c4c4c4" stroke-width="0.5"/>
<path d="M145,88 V92 H149" fill="#fff" stroke="#c8c8c8" stroke-width="0.5"/>
<path d="M133,97 H154 V109.5 H131.5 Z" fill="url(#og)" stroke="#c84a14" stroke-width="0.5"/>
<rect x="133.5" y="97.5" width="20" height="2" fill="#fbd0a0" opacity="0.6"/>
<!-- cabinet -->
<rect x="175.8" y="87.6" width="19.8" height="21.6" rx="1.8" fill="url(#cg)"/>
<rect x="176.5" y="88" width="18.4" height="2.2" rx="1" fill="#e6e6e6"/>
<rect x="177" y="90.8" width="17.4" height="7" fill="#222"/>
<rect x="177.6" y="92.3" width="16.2" height="5.5" fill="#f0a050"/><rect x="177.6" y="92.3" width="16.2" height="1" fill="#d06a20"/><rect x="178" y="94.8" width="15.4" height="1.2" fill="#fff"/>
<rect x="176.5" y="97.8" width="18.4" height="1" fill="#dcdcdc"/>
<rect x="182" y="101" width="8.4" height="4.8" rx="1" fill="#6e6e6e"/><rect x="183.1" y="102.1" width="6.2" height="2.6" rx="0.6" fill="#f2f2f2"/>
<!-- close X -->
<path d="M222.8,92.3 L238,107.5 M238,92.3 L222.8,107.5" stroke="#5e5d59" stroke-width="4.6" stroke-linecap="square"/>
<path d="M222.8,92.3 L238,107.5 M238,92.3 L222.8,107.5" stroke="#74736e" stroke-width="2.4" stroke-linecap="square"/>
<!-- save (disabled) -->
<path d="M264,87 H281.5 Q283,87 283.2,88.5 L285,104.5 V108 Q285,109.5 283.5,109.5 H263.5 Q262,109.5 262,108 V104.5 L262.5,88.5 Q262.7,87 264,87 Z" fill="url(#sg)"/>
<ellipse cx="273.5" cy="98" rx="8.5" ry="5.5" fill="none" stroke="#7a7974" stroke-width="0.7"/>
<rect x="263" y="104.5" width="21" height="3.6" fill="#5e5d59"/><rect x="263" y="104.5" width="21" height="0.8" fill="#a8a7a2"/>
<path d="M270,88 h6.6 v6 h4.6 l-7.9,7.9 l-7.9,-7.9 h4.6 Z" fill="#7fa03c" stroke="#557a22" stroke-width="0.8"/>
<line x1="333.5" y1="77" x2="333.5" y2="120" stroke="#4a4945" stroke-width="1"/>
<!-- undo -->
<path d="M356,99.3 H363.5 Q367.5,99.3 369.8,104.3" stroke="url(#ug)" stroke-width="5.2" stroke-linecap="round" fill="none"/>
<path d="M351,99.3 L358.3,91.8 V106.8 Z" fill="url(#ug)" stroke="#f59a5a" stroke-width="1.6" stroke-linejoin="round"/>
<line x1="425.5" y1="77" x2="425.5" y2="120" stroke="#4a4945" stroke-width="1"/>
<!-- scissors -->
<path d="M447.5,88.5 L455,100.5 M460.5,88.5 L452.5,100.5" stroke="#8e8d88" stroke-width="2" stroke-linecap="round"/>
<ellipse cx="449.3" cy="105.6" rx="3.3" ry="4" fill="none" stroke="#c23c34" stroke-width="1.7"/>
<ellipse cx="458.3" cy="105.6" rx="3.3" ry="4" fill="none" stroke="#c23c34" stroke-width="1.7"/>
<rect x="487" y="88" width="6" height="19" fill="#77766f"/><path d="M488,91 h5 M488,94 h5 M488,97 h5 M488,100 h5 M488,103 h5" stroke="#55544f" stroke-width="0.8"/>
</svg>
<div class="a" style="left:220.5px;top:66px;font-size:15px;color:#a29e96">Save</div>
<div class="a" style="left:308px;top:66px;font-size:15px;color:#dfdbd2">Undo</div>

  <div id="code"><span class="kw">import</span> mpmath
<span class="kw">from</span> mpmath <span class="kw">import</span> *

<span class="kw">def</span> <span class="fn">mafct</span>(n):
  <span class="vn">PI</span> = 3.14159265359
  <span class="vn">liste</span>=[]
  <span class="kw">for</span> b <span class="kw">in</span> <span class="bi">range</span>(2,n):
    <span class="kw">for</span> o <span class="kw">in</span> <span class="bi">range</span>(1,b+1):
      liste.append(cos(2.0*PI*n*o/b))
  <span class="kw">return</span> <span class="bi">sum</span>(liste)

<span class="kw">for</span> x <span class="kw">in</span> <span class="bi">range</span>(101):
  <span class="kw">print</span> mafct(x)

mpmath.plot(mafct,[0,101],points=101)</div>
  <div class="a" style="left:90px;top:194px;width:9px;height:19px;border:1px solid #000"></div>
  <div id="modeline"> -:---  trescontente-mafct-mercredi20170712.py</div>
  <div id="eshade"></div>
</div>
<div id="fig">
  <div id="fbar"></div>
  <div id="ftitle">
    <div class="wb" style="left:7.3px;top:6.3px;background:radial-gradient(circle at 50% 20%,#f58a5e,#e95420 70%);box-shadow:0 0 0 1px #3a2a22"></div>
    <div class="wb" style="left:26.3px;top:6.3px;background:linear-gradient(#8a8780,#64625c);box-shadow:0 0 0 1px #34332f"></div>
    <div class="wb" style="left:45.5px;top:6.3px;background:linear-gradient(#8a8780,#64625c);box-shadow:0 0 0 1px #34332f"></div>
    <svg class="a" style="left:0;top:0" width="70" height="28"><g stroke="#2e2d2a" stroke-width="1.4" fill="none"><path d="M12.4,11.5 l5,5 m0,-5 l-5,5"/><path d="M31,14.3 h7"/><rect x="50.5" y="10.8" width="6.6" height="6.6"/></g></svg>
    <div class="ftxt">Figure 1</div>
  </div>
  <div id="canvasframe"></div>
  <div id="canvas"></div>
</div>
<svg class="plot" width="1920" height="1080" viewBox="0 0 1920 1080" style="position:absolute;left:0;top:0">
<rect x="670.5" y="151.5" width="1101" height="796" fill="#fff"/>
<path d="M670.5,947.5V151.5 M888.5,947.5V151.5 M1106.5,947.5V151.5 M1324.5,947.5V151.5 M1542.5,947.5V151.5 M1760.5,947.5V151.5 M670.5,947.5H1771.5 M670.5,848.5H1771.5 M670.5,748.5H1771.5 M670.5,649.5H1771.5 M670.5,549.5H1771.5 M670.5,450.5H1771.5 M670.5,350.5H1771.5 M670.5,251.5H1771.5 M670.5,151.5H1771.5" stroke="#000" stroke-width="0.6" stroke-dasharray="1.11 3.33" fill="none" opacity="0.8"/>
<path d="M670.5,947.5v-4.4M670.5,151.5v4.4 M888.5,947.5v-4.4M888.5,151.5v4.4 M1106.5,947.5v-4.4M1106.5,151.5v4.4 M1324.5,947.5v-4.4M1324.5,151.5v4.4 M1542.5,947.5v-4.4M1542.5,151.5v4.4 M1760.5,947.5v-4.4M1760.5,151.5v4.4 M670.5,947.5h4.4M1771.5,947.5h-4.4 M670.5,848.5h4.4M1771.5,848.5h-4.4 M670.5,748.5h4.4M1771.5,748.5h-4.4 M670.5,649.5h4.4M1771.5,649.5h-4.4 M670.5,549.5h4.4M1771.5,549.5h-4.4 M670.5,450.5h4.4M1771.5,450.5h-4.4 M670.5,350.5h4.4M1771.5,350.5h-4.4 M670.5,251.5h4.4M1771.5,251.5h-4.4 M670.5,151.5h4.4M1771.5,151.5h-4.4" stroke="#000" stroke-width="0.6" fill="none"/>
<clipPath id="ax"><rect x="670.5" y="151.5" width="1101" height="796"/></clipPath>
<polyline clip-path="url(#ax)" points="670.00,947.50 680.90,947.50 691.80,947.50 702.70,947.50 713.60,937.55 724.50,947.50 735.40,922.62 746.30,947.50 757.20,917.65 768.10,932.58 779.00,912.67 789.90,947.50 800.80,872.88 811.70,947.50 822.60,902.73 833.50,907.70 844.40,877.85 855.30,947.50 866.20,848.00 877.10,947.50 888.00,843.02 898.90,897.75 909.80,882.83 920.70,947.50 931.60,773.38 942.50,922.62 953.40,872.88 964.30,887.80 975.20,813.17 986.10,947.50 997.00,743.52 1007.90,947.50 1018.80,798.25 1029.70,877.85 1040.60,852.98 1051.50,887.80 1062.40,678.85 1073.30,947.50 1084.20,843.02 1095.10,867.90 1106.00,703.73 1116.90,947.50 1127.80,683.83 1138.70,947.50 1149.60,753.48 1160.50,788.30 1171.40,823.12 1182.30,947.50 1193.20,574.38 1204.10,912.67 1215.00,738.55 1225.90,848.00 1236.80,723.62 1247.70,947.50 1258.60,624.12 1269.50,867.90 1280.40,634.08 1291.30,838.05 1302.20,793.27 1313.10,947.50 1324.00,415.18 1334.90,947.50 1345.80,783.33 1356.70,748.50 1367.60,639.05 1378.50,857.95 1389.40,564.42 1400.30,947.50 1411.20,663.92 1422.10,818.15 1433.00,584.33 1443.90,947.50 1454.80,340.55 1465.70,947.50 1476.60,753.48 1487.50,708.70 1498.40,634.08 1509.30,857.95 1520.20,504.73 1531.10,947.50 1542.00,425.12 1552.90,753.48 1563.80,733.58 1574.70,947.50 1585.60,255.98 1596.50,838.05 1607.40,723.62 1618.30,788.30 1629.20,494.78 1640.10,947.50 1651.00,236.08 1661.90,848.00 1672.80,574.38 1683.70,778.35 1694.60,703.73 1705.50,828.10 1716.40,176.38 1727.30,947.50 1738.20,589.30 1749.10,668.90 1760.00,370.40" fill="none" stroke="#0000ff" stroke-width="3.1" stroke-linejoin="round" stroke-linecap="round"/>
<rect x="670.5" y="151.5" width="1101" height="796" fill="none" stroke="#000" stroke-width="1.2"/>
</svg>
<div class="tl" style="left:630.0px;top:949.5px;width:80px;text-align:center;transform:scaleX(1.12)">0</div>
<div class="tl" style="left:848.0px;top:949.5px;width:80px;text-align:center;transform:scaleX(1.12)">20</div>
<div class="tl" style="left:1066.0px;top:949.5px;width:80px;text-align:center;transform:scaleX(1.12)">40</div>
<div class="tl" style="left:1284.0px;top:949.5px;width:80px;text-align:center;transform:scaleX(1.12)">60</div>
<div class="tl" style="left:1502.0px;top:949.5px;width:80px;text-align:center;transform:scaleX(1.12)">80</div>
<div class="tl" style="left:1720.0px;top:949.5px;width:80px;text-align:center;transform:scaleX(1.12)">100</div>
<div class="tl" style="left:585px;top:939.2px;width:80px;text-align:right;transform-origin:100% 50%;transform:scaleX(1.12)">0</div>
<div class="tl" style="left:585px;top:839.7px;width:80px;text-align:right;transform-origin:100% 50%;transform:scaleX(1.12)">20</div>
<div class="tl" style="left:585px;top:740.2px;width:80px;text-align:right;transform-origin:100% 50%;transform:scaleX(1.12)">40</div>
<div class="tl" style="left:585px;top:640.7px;width:80px;text-align:right;transform-origin:100% 50%;transform:scaleX(1.12)">60</div>
<div class="tl" style="left:585px;top:541.2px;width:80px;text-align:right;transform-origin:100% 50%;transform:scaleX(1.12)">80</div>
<div class="tl" style="left:585px;top:441.7px;width:80px;text-align:right;transform-origin:100% 50%;transform:scaleX(1.12)">100</div>
<div class="tl" style="left:585px;top:342.2px;width:80px;text-align:right;transform-origin:100% 50%;transform:scaleX(1.12)">120</div>
<div class="tl" style="left:585px;top:242.7px;width:80px;text-align:right;transform-origin:100% 50%;transform:scaleX(1.12)">140</div>
<div class="tl" style="left:585px;top:143.2px;width:80px;text-align:right;transform-origin:100% 50%;transform:scaleX(1.12)">160</div>
<div class="tl" style="left:1180.5px;top:969.5px;width:80px;text-align:center;transform:scaleX(1.1)">x</div>
<div class="tl" style="left:587px;top:542px;width:80px;text-align:center;transform:rotate(-90deg) scaleX(1.08)">f(x)</div>
<div class="tb" style="left:495px"></div><div class="tb" style="left:525px"></div><div class="tb" style="left:555px"></div><div class="tb" style="left:585px"></div><div class="tb" style="left:615px"></div><div class="tb" style="left:645px"></div><div class="tb" style="left:675px"></div>
<svg class="a" style="left:490px;top:1040px" width="220" height="40" viewBox="490 1040 220 40">
<defs>
<radialGradient id="teal" cx="0.4" cy="0.3" r="0.7"><stop offset="0" stop-color="#4cc0d8"/><stop offset="1" stop-color="#137b96"/></radialGradient>
<linearGradient id="door" x1="0" y1="0" x2="0" y2="1"><stop offset="0" stop-color="#fbe08a"/><stop offset="1" stop-color="#e8a020"/></linearGradient>
</defs>
<!-- home -->
<rect x="502.5" y="1053" width="3" height="6" fill="#f4c060" stroke="#a06040" stroke-width="0.5"/>
<path d="M502,1062 L508.5,1055.5 L515,1062 V1074.5 H502 Z" fill="#f4f4f4" stroke="#8a8a8a" stroke-width="0.5"/>
<path d="M505.5,1074 V1066 Q508.5,1062.5 511.5,1066 V1074 Z" fill="url(#door)" stroke="#b07010" stroke-width="0.4"/>
<path d="M499.2,1064 L509.5,1053.8 L519.5,1063.3" fill="none" stroke="#7a1a2a" stroke-width="3.6" stroke-linejoin="miter"/><path d="M499.2,1064 L509.5,1053.8 L519.5,1063.3" fill="none" stroke="#b83048" stroke-width="2.2" stroke-linejoin="miter"/>
<!-- back -->
<circle cx="539" cy="1063" r="10" fill="url(#teal)"/>
<path d="M533,1063 L539,1057.5 V1061 H544 V1065 H539 V1068.5 Z" fill="#c8eef5"/>
<!-- forward -->
<circle cx="568.8" cy="1063" r="10" fill="url(#teal)"/>
<path d="M574.8,1063 L568.8,1057.5 V1061 H563.8 V1065 H568.8 V1068.5 Z" fill="#c8eef5"/>
<!-- move -->
<path d="M598.5,1053 V1073.5 M587.5,1063 H608.5" stroke="#1d6a86" stroke-width="1.8"/>
<path d="M598.5,1052 l-3.2,4 h6.4 Z M598.5,1074 l-3.2,-4 h6.4 Z M587,1063 l4,-3.2 v6.4 Z M609,1063 l-4,-3.2 v6.4 Z" fill="#1d6a86"/>
<!-- zoom -->
<rect x="621.5" y="1060" width="17" height="13" fill="#f8f8fc" stroke="#9cd8e6" stroke-width="0.9"/>
<circle cx="625" cy="1064" r="6.5" fill="#c4e4ec" fill-opacity="0.8" stroke="#aad4e0" stroke-width="0.6"/>
<path d="M622,1062.5 h6 M622,1064.5 h6 M622,1066.5 h6" stroke="#4a90a8" stroke-width="0.9"/>
<path d="M632,1058.5 L640,1054" stroke="#c87a30" stroke-width="3.6" stroke-linecap="round"/><path d="M632,1058.5 L640,1054" stroke="#f2b060" stroke-width="2.2" stroke-linecap="round"/>
<!-- subplots -->
<rect x="646.5" y="1050.5" width="26" height="26" fill="#fafafa"/>
<rect x="650.5" y="1054.5" width="18" height="17" fill="none" stroke="#111" stroke-width="1.3" rx="1"/>
<rect x="653" y="1057" width="13" height="12" fill="#9ac2e8"/>
<rect x="655.5" y="1059.5" width="8" height="6.5" fill="#fff" stroke="#111" stroke-width="1"/><rect x="655.5" y="1059.5" width="8" height="2" fill="#6a8ab0"/>
<path d="M659.5,1052 l-3.6,3.8 h7.2 Z M659.5,1074.5 l-3.6,-3.8 h7.2 Z M648,1063 l3.8,-3.6 v7.2 Z M671,1063 l-3.8,-3.6 v7.2 Z" fill="#4ac040" stroke="#2a8a20" stroke-width="0.5"/>
<!-- save floppy -->
<rect x="677.5" y="1051" width="24" height="24" rx="2" fill="#0e4a72"/><circle cx="679.8" cy="1055" r="0.8" fill="#fff"/><circle cx="699.2" cy="1055" r="0.8" fill="#fff"/>
<rect x="681.5" y="1052.5" width="16" height="9" fill="#b8c8d4"/>
<rect x="681.5" y="1052.5" width="16" height="1.5" fill="#e09050"/>
<path d="M684,1056.5 h11 M684,1058.5 h11" stroke="#3a5a7a" stroke-width="0.9"/>
<rect x="683.5" y="1065.5" width="12" height="9" fill="#b8c8d4"/>
<rect x="685" y="1067" width="2.5" height="7" fill="#0e4a72"/>
</svg>

<div id="rstrip"></div><div id="rstrip2"></div>
</body></html>
